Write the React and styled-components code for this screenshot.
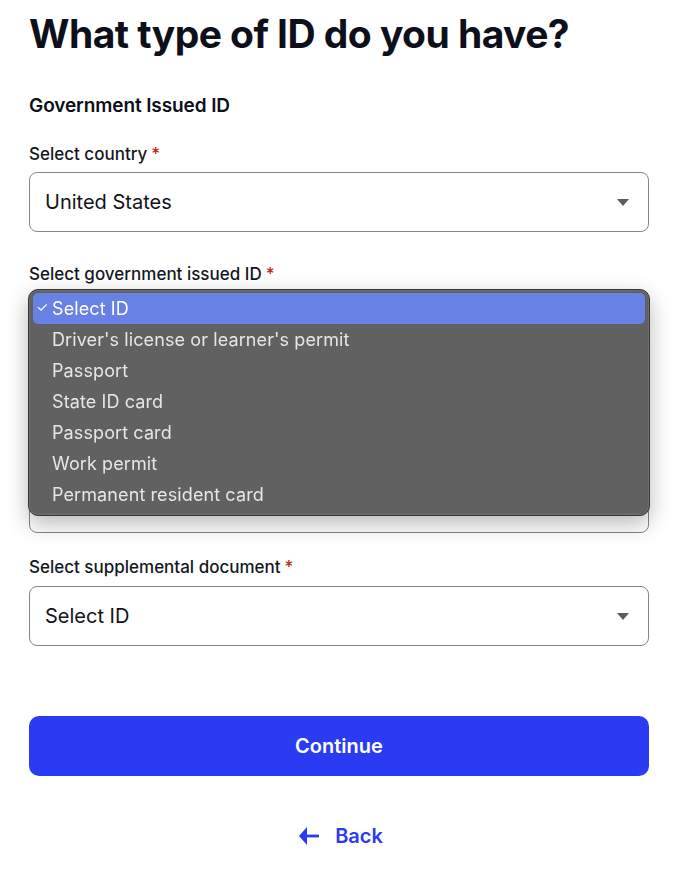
import React from 'react';
import styled, { createGlobalStyle } from 'styled-components';

const GlobalStyle = createGlobalStyle`
  html, body {
    margin: 0;
    padding: 0;
    background: #ffffff;
  }
  body {
    font-family: Inter, "Noto Sans", "Liberation Sans", sans-serif;
    color: #0f111a;
    -webkit-font-smoothing: antialiased;
  }
`;

const Page = styled.div`
  width: 620px;
  padding: 0 29px;
  display: flex;
  flex-direction: column;
`;

const Title = styled.h1`
  margin: 10px 0 0;
  font-size: 39px;
  line-height: 48px;
  font-weight: 700;
  letter-spacing: -0.55px;
  color: #0d0f1a;
`;

const Section = styled.h2`
  margin: 36px 0 0;
  font-size: 19px;
  line-height: 24px;
  font-weight: 600;
  letter-spacing: -0.1px;
  color: #0d0f1a;
`;

const Field = styled.div`
  display: flex;
  flex-direction: column;
  gap: ${p => p.$gap || 6}px;
  margin-top: ${p => p.$top}px;
`;

const SelectWrap = styled.div`
  position: relative;
`;

const Label = styled.label`
  font-size: 17px;
  line-height: 24px;
  font-weight: 500;
  color: #15171f;
  display: flex;
  gap: 4px;
`;

const Star = styled.span`
  color: #bd261c;
`;

const SelectBox = styled.div`
  height: 58px;
  border: 1px solid #85868c;
  border-radius: 8px;
  display: flex;
  align-items: center;
  justify-content: space-between;
  padding: 0 19px 0 15px;
  font-size: 20px;
  color: #111318;
  background: #fff;
`;

const Caret = styled.span`
  margin-left: auto;
  width: 0;
  height: 0;
  border-left: 6px solid transparent;
  border-right: 6px solid transparent;
  border-top: 7px solid #5c5c60;
`;

const Menu = styled.ul`
  position: absolute;
  left: -1px;
  top: -1px;
  width: 622px;
  box-sizing: border-box;
  margin: 0;
  padding: 3px 4px 5px;
  list-style: none;
  border-radius: 10px;
  background: rgba(92, 92, 92, 0.97);
  backdrop-filter: blur(8px);
  border: 1px solid #353535;
  box-shadow: inset 0 0 0 1px rgba(255, 255, 255, 0.1), 0 8px 22px rgba(0, 0, 0, 0.28);
  z-index: 5;
`;

const Option = styled.li`
  position: relative;
  height: 31px;
  display: flex;
  align-items: center;
  padding-left: 19px;
  border-radius: 5px;
  font-size: 18px;
  letter-spacing: 0.1px;
  background: ${p => (p.$active ? '#6781e4' : 'transparent')};
  color: ${p => (p.$active ? '#ffffff' : '#e6e6e6')};
`;

const Check = styled.span`
  position: absolute;
  left: 3px;
  top: 5px;
  font-size: 14px;
  color: #fff;
`;

const Button = styled.button`
  margin-top: 70px;
  height: 60px;
  border: none;
  border-radius: 10px;
  background: #2a3bf3;
  color: #fff;
  font-family: inherit;
  font-size: 20px;
  font-weight: 600;
  cursor: pointer;
`;

const BackLink = styled.a`
  margin-top: 48px;
  align-self: center;
  display: flex;
  align-items: center;
  gap: 16px;
  font-size: 20px;
  line-height: 24px;
  font-weight: 600;
  color: #2a3bf3;
  text-decoration: none;
  margin-left: 4px;
`;

const options = [
  'Select ID',
  "Driver's license or learner's permit",
  'Passport',
  'State ID card',
  'Passport card',
  'Work permit',
  'Permanent resident card',
];

const BackArrow = () => (
  <svg width="20" height="20" viewBox="0 0 20 20">
    <polygon points="0,10 8,1 8,19" fill="#2a3bf3" />
    <rect x="7" y="8.6" width="13" height="2.8" fill="#2a3bf3" />
  </svg>
);

export default function App() {
  return (
    <>
      <GlobalStyle />
      <Page>
        <Title>What type of ID do you have?</Title>
        <Section>Government Issued ID</Section>

        <Field $top={24}>
          <Label>Select country<Star>*</Star></Label>
          <SelectBox>United States<Caret /></SelectBox>
        </Field>

        <Field $top={30} $gap={4}>
          <Label>Select government issued ID<Star>*</Star></Label>
          <SelectWrap>
            <SelectBox><Caret /></SelectBox>
            <Menu>
              {options.map((o, i) => (
                <Option key={o} $active={i === 0}>
                  {i === 0 && <Check>✓</Check>}
                  {o}
                </Option>
              ))}
            </Menu>
          </SelectWrap>
        </Field>

        <Field $top={123}>
          <SelectBox><Caret /></SelectBox>
        </Field>

        <Field $top={22} $gap={7}>
          <Label>Select supplemental document<Star>*</Star></Label>
          <SelectBox>Select ID<Caret /></SelectBox>
        </Field>

        <Button>Continue</Button>

        <BackLink href="#">
          <BackArrow />
          Back
        </BackLink>
      </Page>
    </>
  );
}
